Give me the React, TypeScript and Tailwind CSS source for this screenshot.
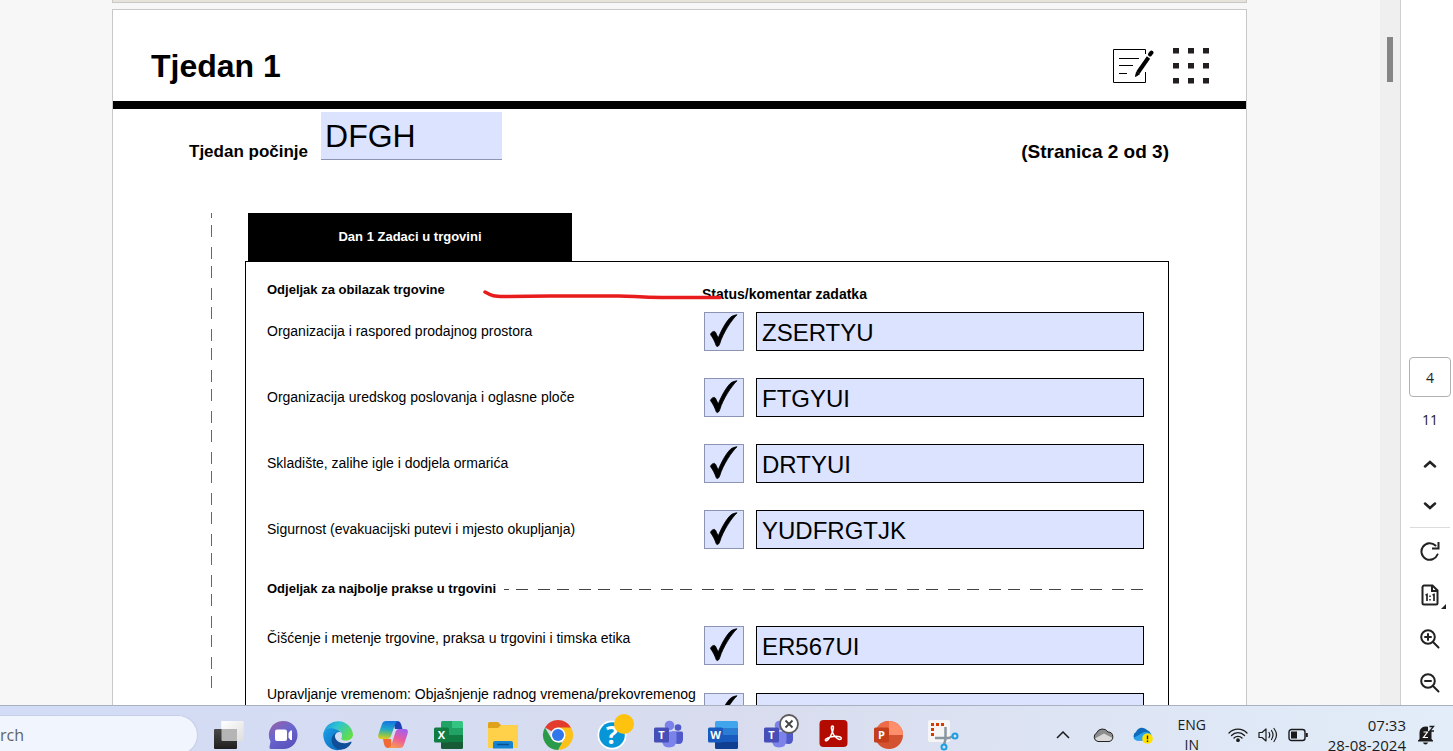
import * as React from "react";
import {clsx} from "clsx";

const tasks = [
  {id: 'layout', label: 'Organizacija i raspored prodajnog prostora', value: 'ZSERTYU'},
  {id: 'office', label: 'Organizacija uredskog poslovanja i oglasne ploče', value: 'FTGYUI'},
  {id: 'storage', label: 'Skladište, zalihe igle i dodjela ormarića', value: 'DRTYUI'},
  {id: 'safety', label: 'Sigurnost (evakuacijski putevi i mjesto okupljanja)', value: 'YUDFRGTJK'},
];

// Check box and comment field of one task
const TaskFields = ({id, label, value, className}: {id: string; label: string; value: string; className?: string}) => (
  <div className={clsx('flex gap-3', className)}>
    <span className="relative block h-10 w-10 shrink-0">
      <input
        id={id}
        type="checkbox"
        defaultChecked
        className="peer block h-[39px] w-10 appearance-none border border-[#8c93b3] bg-[#dce3ff]"
      />
      <svg viewBox="0 0 40 39" className="pointer-events-none absolute inset-0 hidden h-[39px] w-10 peer-checked:block">
        <path
          d="M6.500 22.500C7 20 10.500 18.200 11.500 20.300L14.200 26C17.500 18 22 9.500 26.500 5.300C28.500 3.600 30.500 3.200 33 2.800C27.500 8 19 21 15.800 31.500C15 34.500 12.800 35.500 12.200 33.600C10.800 29.500 9 26 6.500 22.500Z"
          fill="#000"
          stroke="#000"
          strokeWidth=".8"
        />
      </svg>
    </span>
    <input
      type="text"
      aria-label={`Komentar: ${label}`}
      defaultValue={value}
      className="h-[39px] w-[388px] border border-black bg-[#dce3ff] px-[5px] pt-[2px] text-2xl text-black outline-none"
    />
  </div>
);

const NoteIcon = () => (
  <svg viewBox="0 0 42 36" className="h-9 w-[42px]" fill="none" stroke="#000">
    <path d="M33.500 6V1.500H1.500V34.500H33.500V24" />
    <path d="M7 10.500H27M7 17.500H21M7 25.500H15" />
    <path d="M26 24.500L36.500 9.500" strokeWidth="4" />
    <path d="M23.500 28.500L24.500 24L27.500 26Z" fill="#000" />
    <path d="M38 6.500L39.500 4.500" strokeWidth="4" strokeLinecap="round" />
  </svg>
);

const DotsIcon = () => (
  <svg viewBox="0 0 36 36" className="h-9 w-9" fill="#231f20">
    {[0, 15, 30].map(y => [0, 15, 30].map(x => <rect key={`${x}-${y}`} x={x} y={y} width="6" height="5.500" />))}
  </svg>
);

const Document = () => (
  <article className="border border-[#c8c8c8] bg-white font-['Liberation_Sans',sans-serif] text-black">
    <header className="flex h-[99px] items-center justify-between border-b-8 border-black pt-5 pr-[37px] pl-[38px]">
      <h1 className="text-[32px] leading-10 font-bold">Tjedan 1</h1>
      <div className="flex items-center gap-[19px]">
        <NoteIcon />
        <DotsIcon />
      </div>
    </header>

    <div className="flex items-end justify-between pt-[3px] pr-[77px] pl-[76px]">
      <div className="flex items-end gap-[13px]">
        <label htmlFor="week-start" className="text-[17px] leading-4 font-bold">Tjedan počinje</label>
        <input
          id="week-start"
          type="text"
          defaultValue="DFGH"
          className="h-12 w-[181px] border-b border-[#8c93b3] bg-[#dce3ff] px-1 text-[32px] outline-none"
        />
      </div>
      <p className="text-[19px] leading-4 font-bold">(Stranica 2 od 3)</p>
    </div>

    <div className="mt-[53px] flex gap-8 pr-[77px] pl-[98px]">
      <svg className="h-[481px] w-[2px] shrink-0">
        <line x1=".5" y1="0" x2=".5" y2="481" stroke="#666" strokeDasharray="12 7 12 10" strokeDashoffset="7" />
      </svg>
      <section className="min-w-0 flex-1">
        <h2 className="ml-[3px] flex h-12 w-[324px] items-center justify-center bg-black text-[13px] font-bold text-white">
          Dan 1 Zadaci u trgovini
        </h2>
        <div className="relative border border-black pr-6 pb-10 pl-[21px]">
          <div className="flex h-[50px] justify-between text-sm leading-5 font-bold">
            <h3 className="pt-[18px] text-[13px] leading-5">Odjeljak za obilazak trgovine</h3>
            <p className="w-[442px] pt-[22px]">Status/komentar zadatka</p>
          </div>
          {/* red pen stroke */}
          <svg viewBox="0 0 240 12" className="absolute top-[26px] left-[236px] h-3 w-60" fill="none">
            <path d="M3 4C10 8 12 8.500 22 8.500C60 8 100 8 137 8C150 8 158 9.500 180 9.500L238 9.500" stroke="#e81c1c" strokeWidth="3.500" strokeLinecap="round" />
          </svg>
          {tasks.map(task => (
            <div key={task.id} className="flex h-[66px] justify-between text-sm">
              <label htmlFor={task.id} className="flex h-[37px] items-center">{task.label}</label>
              <TaskFields {...task} />
            </div>
          ))}

          <div className="mb-6 flex h-[26px] items-center gap-2">
            <h3 className="text-[13px] font-bold">Odjeljak za najbolje prakse u trgovini</h3>
            <svg className="h-[2px] min-w-0 flex-1">
              <line x1="0" y1="1.500" x2="2000" y2="1.500" stroke="#444" strokeDasharray="12 7 12 10" strokeDashoffset="7" />
            </svg>
          </div>

          <div className="flex h-[58px] justify-between text-sm">
            <label htmlFor="cleaning" className="leading-6">Čišćenje i metenje trgovine, praksa u trgovini i timska etika</label>
            <TaskFields id="cleaning" label="Čišćenje i metenje trgovine" value="ER567UI" />
          </div>
          <div className="flex justify-between text-sm">
            <label htmlFor="time" className="whitespace-nowrap leading-5">Upravljanje vremenom: Objašnjenje radnog vremena/prekovremenog</label>
            <TaskFields id="time" label="Upravljanje vremenom" value="" className="pt-[9px]" />
          </div>
        </div>
      </section>
    </div>
  </article>
);

const toolButton = 'flex h-11 w-full shrink-0 items-center justify-center';

// Page navigation and zoom on the right edge
const ViewerTools = () => (
  <aside className="flex w-[53px] shrink-0 flex-col items-center justify-end border-l border-[#cfcfcf] bg-white px-[5px] font-['Open_Sans',sans-serif] text-sm text-[#222]">
    <input
      type="text"
      aria-label="Page number"
      defaultValue="4"
      className="ml-[6px] h-10 w-[42px] shrink-0 rounded border border-[#b1b1b1] text-center text-[#222]"
    />
    <div className="flex w-full flex-col items-center pl-[6px]">
      <span className="flex h-[46px] items-center">11</span>
      <button aria-label="Previous page" className="flex h-[42px] w-full items-center justify-center">
        <svg viewBox="0 0 14 8" className="h-2 w-3.5" fill="none" stroke="#222" strokeWidth="2.500" strokeLinecap="round"><path d="M2 6.500L7 2L12 6.500" /></svg>
      </button>
      <button aria-label="Next page" className="flex h-[42px] w-full items-center justify-center">
        <svg viewBox="0 0 14 8" className="h-2 w-3.5" fill="none" stroke="#222" strokeWidth="2.500" strokeLinecap="round"><path d="M2 1.500L7 6L12 1.500" /></svg>
      </button>
      <hr className="mb-px w-10 border-[#dcdcdc]" />
      <button aria-label="Rotate" className={toolButton}>
        <svg viewBox="0 0 20 20" className="h-5 w-5" fill="none" stroke="#222" strokeWidth="2">
          <path d="M17.500 13.500A8.300 8.300 0 1 1 15.500 4.500" strokeLinecap="round" />
          <path d="M18.500 1V7.500H12" />
        </svg>
      </button>
      <button aria-label="Actual size" className={clsx(toolButton, 'relative')}>
        <svg viewBox="0 0 18 22" className="h-[22px] w-[18px]" fill="none" stroke="#222" strokeWidth="2">
          <path d="M1.500 3A2 2 0 0 1 3 1.500H11.500L16.500 6.500V19A1.500 1.500 0 0 1 15 20.500H3A1.500 1.500 0 0 1 1.500 19Z" />
          <path d="M11 1.500V7H16.500" />
          <path d="M4.500 11L6 10.500V17M11.500 11L13 10.500V17" strokeWidth="1.700" />
          <path d="M9 11.500V13M9 15V16.500" strokeWidth="1.500" />
        </svg>
        <svg viewBox="0 0 5 5" className="absolute right-[2px] bottom-2 h-[5px] w-[5px]"><path d="M5 0V5H0Z" fill="#222" /></svg>
      </button>
      <button aria-label="Zoom in" className={toolButton}>
        <svg viewBox="0 0 20 20" className="h-5 w-5" fill="none" stroke="#222" strokeWidth="2" strokeLinecap="round">
          <circle cx="8" cy="8" r="6.800" /><path d="M13 13L18.500 18.500M5 8H11M8 5V11" />
        </svg>
      </button>
      <button aria-label="Zoom out" className={toolButton}>
        <svg viewBox="0 0 20 20" className="h-5 w-5" fill="none" stroke="#222" strokeWidth="2" strokeLinecap="round">
          <circle cx="8" cy="8" r="6.800" /><path d="M13 13L18.500 18.500M5 8H11" />
        </svg>
      </button>
    </div>
  </aside>
);

const Letter = ({x, y, size = 11, children}: {x: number; y: number; size?: number; children: string}) => (
  <text x={x} y={y} textAnchor="middle" fontSize={size} fontWeight="700" fill="#fff" fontFamily="Open Sans, sans-serif">{children}</text>
);

const TeamsShapes = () => (
  <>
    <circle cx="25" cy="7.500" r="3.300" fill="#5059c9" />
    <path d="M19 11.500H28.500Q30 11.500 30 13V19Q30 24 25.500 24Q21 24 19 21Z" fill="#5059c9" />
    <circle cx="16.500" cy="5.500" r="4.800" fill="#7b83eb" />
    <path d="M9 11.500H22Q23.500 11.500 23.500 13V20Q23.500 27.500 16 27.500Q9 27.500 9 20Z" fill="#7b83eb" />
    <rect x="1" y="7.500" width="15" height="15" rx="1.500" fill="#464eb8" />
    <Letter x={8.5} y={19}>T</Letter>
  </>
);

const apps = [
  {
    name: 'Task view',
    art: (
      <>
        <defs>
          <linearGradient id="tv" x1="0" y1="0" x2="0" y2="1"><stop stopColor="#4a4a48" /><stop offset="1" stopColor="#1f1f1f" /></linearGradient>
          <linearGradient id="tw" x1="0" y1="0" x2="1" y2="1"><stop stopColor="#fff" /><stop offset="1" stopColor="#dedede" /></linearGradient>
        </defs>
        <rect x="8.500" y="1" width="22" height="20" rx="1" fill="url(#tw)" />
        <rect x="1" y="9" width="23" height="20" rx="1" fill="url(#tv)" />
        <path d="M8.500 1H30.500V21H24V9H8.500Z" fill="url(#tw)" />
        <path d="M8.500 9H24V21H9.500Q8.500 21 8.500 20Z" fill="#b5b5b5" />
      </>
    ),
  },
  {
    name: 'Chat',
    art: (
      <>
        <defs><linearGradient id="chat" x1="0" y1="0" x2=".6" y2="1"><stop stopColor="#9c5fa0" /><stop offset=".5" stopColor="#6b66cf" /><stop offset="1" stopColor="#5b52bd" /></linearGradient></defs>
        <path d="M15.500 1A14 14 0 1 1 15.500 29H3Q1 29 1.500 27L2.500 21.500A14 14 0 0 1 15.500 1Z" fill="url(#chat)" />
        <rect x="7" y="9.500" width="12" height="11.500" rx="2" fill="#fff" />
        <path d="M20.500 13L22.500 10.500H24V20H22.500L20.500 17.500Z" fill="#fff" />
      </>
    ),
  },
  {
    name: 'Edge',
    art: (
      <>
        <defs>
          <linearGradient id="e1" x1="0" y1="0" x2="1" y2=".6"><stop stopColor="#1e8fe0" /><stop offset=".45" stopColor="#2ec3d2" /><stop offset="1" stopColor="#62de4a" /></linearGradient>
          <linearGradient id="e2" x1="0" y1="0" x2="1" y2="1"><stop stopColor="#1aa0e8" /><stop offset="1" stopColor="#0a62b8" /></linearGradient>
        </defs>
        <path d="M.5 13A15 15 0 0 1 30 14C30 19 26 20.500 22.500 20.500C19 20.500 18 19 18.500 18C20 15 18.500 11 15 10C8 8 2 9 .5 13Z" fill="url(#e1)" />
        <path d="M.2 14C1 9 7 7 12 9C19 11 18 14 17 12C13 11 10 17 12 22C13.500 26 16 29 20 29C10 33 0 26 .2 14Z" fill="url(#e2)" />
        <path d="M11 14C6 19 9 29 18 29.500C23 29.500 27 26 28.500 22.500C29 21.500 28 21.500 27 22C20 25 13 22 12 17C11.500 15 12 14 13 13Z" fill="#104f97" />
      </>
    ),
  },
  {
    name: 'Copilot',
    art: (
      <>
        <defs>
          <linearGradient id="c1" x1=".4" y1="0" x2=".3" y2="1"><stop stopColor="#1476e0" /><stop offset=".45" stopColor="#21a7c9" /><stop offset=".75" stopColor="#7cc35b" /><stop offset="1" stopColor="#e8c81c" /></linearGradient>
          <linearGradient id="c2" x1=".7" y1="0" x2=".3" y2="1"><stop stopColor="#a25ff0" /><stop offset=".5" stopColor="#ea5b9d" /><stop offset="1" stopColor="#f99a4e" /></linearGradient>
        </defs>
        <path d="M15 1H19Q22 1 23 4L24.500 9H17Z" fill="#1b43b5" />
        <path d="M8 1H20Q17.500 2 16.500 6L13 16Q12 19 9 19H3Q-1 19 .5 14L4 4Q5 1 8 1Z" fill="url(#c1)" />
        <path d="M14 28H10Q7 28 6 24L5 19H13Z" fill="#ef6a36" />
        <path d="M22 28H10Q13 27 14 23L17.500 12Q18.500 9 21 9H27Q31 9 29.500 14L26 24.500Q25 28 22 28Z" fill="url(#c2)" />
      </>
    ),
  },
  {
    name: 'Excel',
    art: (
      <>
        <path d="M8 2.500Q8 1 9.500 1H19V10H8Z" fill="#21a366" /><path d="M19 1H28.500Q30 1 30 2.500V10H19Z" fill="#33c481" />
        <path d="M8 8H19V15H8Z" fill="#21a366" /><path d="M19 8H30V15H19Z" fill="#21a366" />
        <path d="M8 15H19V22H8Z" fill="#107c41" /><path d="M19 15H30V22H19Z" fill="#107c41" />
        <path d="M8 22H30V27.500Q30 29 28.500 29H9.500Q8 29 8 27.500Z" fill="#185c37" />
        <rect x="1" y="7.500" width="15" height="15" rx="1.500" fill="#107c41" />
        <Letter x={8.5} y={19}>X</Letter>
      </>
    ),
  },
  {
    name: 'File explorer',
    art: (
      <>
        <path d="M0 3.500Q0 2 1.500 2H10L13 5H28.500Q30 5 30 6.500V12H0Z" fill="#dfa21a" />
        <path d="M0 8H10L13 5H28.500Q30 5 30 6.500V28H0Z" fill="#ffd04a" />
        <path d="M5 28.500V23Q5 21 7 21H23Q25 21 25 23V28.500Z" fill="#1683d2" />
        <path d="M9 24.500H21" stroke="#0a4f8c" strokeWidth="1.500" />
      </>
    ),
  },
  {
    name: 'Chrome',
    art: (
      <>
        <path d="M15 15L2 7.500A15 15 0 0 1 28 7.500Z" fill="#e33b2e" />
        <path d="M15 7.500H28A15 15 0 0 1 15 30L21.500 18.700Z" fill="#fbc116" />
        <path d="M2 7.500L8.500 18.700L15 22.500H19.300L15 30A15 15 0 0 1 2 7.500Z" fill="#2b9a48" />
        <circle cx="15" cy="15" r="7.500" fill="#fff" /><circle cx="15" cy="15" r="6" fill="#2f77ea" />
      </>
    ),
  },
  {
    name: 'Help',
    art: (
      <>
        <circle cx="14" cy="15" r="14.500" fill="#fff" /><circle cx="14" cy="15" r="12.800" fill="#0696d7" />
        <Letter x={14} y={24} size={25}>?</Letter>
        <circle cx="26" cy="4" r="10" fill="#ffc20e" />
      </>
    ),
  },
  {name: 'Teams', art: <TeamsShapes />},
  {
    name: 'Word',
    art: (
      <>
        <path d="M7 2.500Q7 1 8.500 1H28.500Q30 1 30 2.500V8H7Z" fill="#41a5ee" /><path d="M7 8H30V15H7Z" fill="#2b7cd3" />
        <path d="M7 15H30V22H7Z" fill="#185abd" /><path d="M7 22H30V27.500Q30 29 28.500 29H8.500Q7 29 7 27.500Z" fill="#103f91" />
        <rect x="0" y="7.500" width="15" height="15" rx="1.500" fill="#185abd" />
        <Letter x={7.5} y={19}>W</Letter>
      </>
    ),
  },
  {
    name: 'Teams (offline)',
    art: (
      <>
        <TeamsShapes />
        <circle cx="26" cy="4" r="9" fill="#fff" stroke="#5c5c5c" strokeWidth="1.800" />
        <path d="M22.500 .5L29.500 7.500M29.500 .5L22.500 7.500" stroke="#444" strokeWidth="1.800" />
      </>
    ),
  },
  {
    name: 'Acrobat',
    art: (
      <>
        <rect x="1.500" y="0" width="28" height="27" rx="4" fill="#b30b00" />
        <path d="M14.500 6C12.500 6 13.500 11 15.500 14.500C17.500 18 21.500 20.500 23 19C24.500 17 20 16 15.500 16.500C11 17 6.500 19 7.500 20.500C9 22 12.500 17 14 13C15.500 9.500 16 6 14.500 6Z" fill="none" stroke="#fff" strokeWidth="1.500" />
      </>
    ),
  },
  {
    name: 'PowerPoint',
    art: (
      <>
        <circle cx="16" cy="15" r="14" fill="#d35230" />
        <path d="M16 1A14 14 0 0 0 2 15H16Z" fill="#ed6c47" /><path d="M16 1A14 14 0 0 1 30 15H16Z" fill="#ff8f6b" />
        <rect x="1" y="7.500" width="15" height="15" rx="1.500" fill="#c43e1c" />
        <Letter x={8.5} y={19}>P</Letter>
      </>
    ),
  },
  {
    name: 'Snipping tool',
    art: (
      <>
        <rect x="0" y="0" width="22" height="22" rx="2" fill="#f5f5f5" />
        <path d="M4.500 16V4.500H17" fill="none" stroke="#d83b01" strokeWidth="3" strokeDasharray="3 2" />
        <path d="M17.500 7V19L16 25M7 18H21L25 16" fill="none" stroke="#8a969f" strokeWidth="2.500" />
        <circle cx="27" cy="16" r="2.500" fill="none" stroke="#1c9fe0" strokeWidth="2" />
        <circle cx="16" cy="27" r="2.500" fill="none" stroke="#1c9fe0" strokeWidth="2" />
      </>
    ),
  },
];

const Tray = () => (
  <div className="ml-auto flex shrink-0 items-center pr-[18px] text-[#1b1b1b]">
    <button aria-label="Hidden icons">
      <svg viewBox="0 0 14 8" className="h-2 w-3.5" fill="none" stroke="currentColor" strokeWidth="1.500"><path d="M1 7L7 1L13 7" /></svg>
    </button>
    <svg viewBox="0 0 22 16" className="ml-[22px] h-4 w-[22px]">
      <path d="M6 14.500A4.600 4.600 0 0 1 4.500 6A6.500 6.500 0 0 1 16 5A4.800 4.800 0 0 1 17 14.500Z" fill="#8d8d8d" />
      <path d="M2 12L12 6.500L20.500 11Q20 14.500 17 14.500H6Q3 14.500 2 12Z" fill="#d9d9d9" />
      <path d="M6 14.500A4.600 4.600 0 0 1 4.500 6A6.500 6.500 0 0 1 16 5A4.800 4.800 0 0 1 17 14.500Z" fill="none" stroke="#222" />
    </svg>
    <svg viewBox="0 0 22 18" className="ml-[18px] h-[18px] w-[22px]">
      <path d="M5 14.500A4.600 4.600 0 0 1 4 6A6.500 6.500 0 0 1 15 4Q18 5 19 8L15 14.500Z" fill="#0f6cbd" />
      <path d="M1.500 12L12 6Q19 6 20 10Q20 14.500 17 14.500H5Q3 14.500 1.500 12Z" fill="#2aa3ea" />
      <circle cx="15.500" cy="12.500" r="5.300" fill="#ffe100" />
      <path d="M15.500 9.500V13.200M15.500 14.500V16" stroke="#222" strokeWidth="1.400" />
    </svg>
    <div className="ml-[22px] w-8 text-center text-sm leading-5">ENG<br />IN</div>
    <svg viewBox="0 0 20 16" className="ml-5 h-4 w-5" fill="none" stroke="currentColor" strokeWidth="1.300" strokeLinecap="round">
      <path d="M1 6A12.500 12.500 0 0 1 19 6M3.500 8.500A9 9 0 0 1 16.500 8.500M6 11A5.600 5.600 0 0 1 14 11" />
      <circle cx="10" cy="13.200" r="1.200" fill="currentColor" />
    </svg>
    <svg viewBox="0 0 20 16" className="ml-[10px] h-4 w-5" fill="none" stroke="currentColor" strokeWidth="1.200" strokeLinecap="round" strokeLinejoin="round">
      <path d="M1 5.500H4L8 2V14L4 10.500H1ZM11 5.500Q12.500 8 11 10.500M13.500 3.500Q16.500 8 13.500 12.500M16 1.500Q21 8 16 14.500" />
    </svg>
    <svg viewBox="0 0 20 14" className="ml-[10px] h-3.5 w-5" fill="none" stroke="currentColor" strokeWidth="1.400">
      <rect x="1" y="1.500" width="16" height="11" rx="2.500" /><rect x="3" y="3.500" width="6" height="7" fill="currentColor" stroke="none" /><path d="M18.800 5V9" strokeWidth="2" />
    </svg>
    <div className="ml-5 text-right text-[15px] leading-5"><time>07:33</time><br /><time>28-08-2024</time></div>
    <svg viewBox="0 0 18 20" className="ml-[11px] h-5 w-[18px]">
      <path d="M2.500 14V8Q2.500 2 8.500 1.500L11 1.700V6H14.500V14L16 15.500V16.500H1V15.500Z" fill="#1b1b1b" />
      <path d="M6 17.500H11Q10.500 19.500 8.500 19.500T6 17.500Z" fill="#1b1b1b" />
      <path d="M6.500 7H10.500L6.500 12.500H11" fill="none" stroke="#fff" strokeWidth="1.200" />
      <path d="M12.500 1.500H16.500L12.800 6H17" fill="none" stroke="#1b1b1b" strokeWidth="1.300" />
    </svg>
  </div>
);

const Taskbar = () => (
  <footer className="h-[46px] shrink-0 overflow-hidden border-t border-[#a9b1c1] bg-linear-to-r from-[#d2dcf6] via-[#d8dcee] to-[#e2edf9] font-['Open_Sans',sans-serif]">
    <div className="flex h-[58px] items-center">
      <input
        type="search"
        aria-label="Search"
        placeholder="rch"
        className="h-10 w-[198px] shrink-0 rounded-r-full border border-l-0 border-[#c5cfe8] bg-[#f1f5fd] text-base placeholder:text-[#5f6368]"
      />
      <nav className="ml-[15px] flex gap-[25px]">
        {apps.map(app => (
          <button key={app.name} aria-label={app.name}>
            <svg viewBox="0 0 30 30" className="h-[30px] w-[30px] overflow-visible">{app.art}</svg>
          </button>
        ))}
      </nav>
      <Tray />
    </div>
  </footer>
);

const App = () => (
  <div className="flex h-screen flex-col overflow-hidden">
    <div className="flex min-h-0 flex-1">
      <main className="min-w-0 flex-1 overflow-hidden bg-[#f7f7f7] pr-[133px] pl-28">
        <div className="mb-[6px] h-[3px] border-x border-b border-[#c8c8c8] bg-[#e6e3da]" />
        <Document />
      </main>
      {/* scroll track */}
      <div className="w-5 shrink-0 bg-[#efefef] px-[7px] pt-[37px]">
        <div className="h-[45px] bg-[#858585]" />
      </div>
      <ViewerTools />
    </div>
    <Taskbar />
  </div>
);

export default App;
